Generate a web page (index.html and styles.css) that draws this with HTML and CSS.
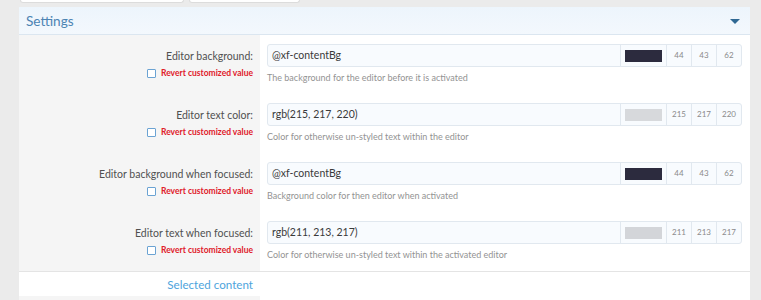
FILE: index.html
```html
<!DOCTYPE html>
<html lang="en">
<head>
    <meta charset="UTF-8" />
    <title>Settings</title>
    <link rel="stylesheet" href="styles.css">
</head>
<body>

<div class="tabs">
    <div class="tab tab-wide"></div>
    <div class="tab tab-narrow"></div>
</div>

<div class="block">
    <h2 class="block-header">
        Settings
        <span class="toggle"></span>
    </h2>

    <div class="row">
        <div class="row-label">
            <label>Editor background:</label>
            <div class="revert"><span class="check"></span>Revert customized value</div>
        </div>
        <div class="row-input">
            <div class="color-input">
                <span class="value">@xf-contentBg</span>
                <span class="swatch-cell"><span class="swatch" style="background: rgb(44, 43, 62);"></span></span>
                <span class="channel">44</span>
                <span class="channel">43</span>
                <span class="channel">62</span>
            </div>
            <p class="hint">The background for the editor before it is activated</p>
        </div>
    </div>

    <div class="row">
        <div class="row-label">
            <label>Editor text color:</label>
            <div class="revert"><span class="check"></span>Revert customized value</div>
        </div>
        <div class="row-input">
            <div class="color-input">
                <span class="value">rgb(215, 217, 220)</span>
                <span class="swatch-cell"><span class="swatch" style="background: rgb(215, 217, 220);"></span></span>
                <span class="channel">215</span>
                <span class="channel">217</span>
                <span class="channel">220</span>
            </div>
            <p class="hint">Color for otherwise un-styled text within the editor</p>
        </div>
    </div>

    <div class="row">
        <div class="row-label">
            <label>Editor background when focused:</label>
            <div class="revert"><span class="check"></span>Revert customized value</div>
        </div>
        <div class="row-input">
            <div class="color-input">
                <span class="value">@xf-contentBg</span>
                <span class="swatch-cell"><span class="swatch" style="background: rgb(44, 43, 62);"></span></span>
                <span class="channel">44</span>
                <span class="channel">43</span>
                <span class="channel">62</span>
            </div>
            <p class="hint">Background color for then editor when activated</p>
        </div>
    </div>

    <div class="row">
        <div class="row-label">
            <label>Editor text when focused:</label>
            <div class="revert"><span class="check"></span>Revert customized value</div>
        </div>
        <div class="row-input">
            <div class="color-input">
                <span class="value">rgb(211, 213, 217)</span>
                <span class="swatch-cell"><span class="swatch" style="background: rgb(211, 213, 217);"></span></span>
                <span class="channel">211</span>
                <span class="channel">213</span>
                <span class="channel">217</span>
            </div>
            <p class="hint">Color for otherwise un-styled text within the activated editor</p>
        </div>
    </div>

    <div class="sub-header">
        <span>Selected content</span>
    </div>

    <div class="row">
        <div class="row-label"></div>
        <div class="row-input"></div>
    </div>
</div>

</body>
</html>
```

FILE: styles.css
```css
body {
    font-family: Lato, 'Open Sans', sans-serif;
    background: #ebebeb;
    color: #333;
    margin: 0;
}
.tabs {
    display: flex;
    gap: 5px;
    height: 3px;
    padding-left: 20px;
    overflow: hidden;
}
.tab {
    height: 2px;
    background: #fff;
    border: 1px solid #dcdcdc;
    border-top: none;
    border-radius: 0 0 3px 3px;
}
.tab-wide {
    width: 162px;
}
.tab-narrow {
    width: 109px;
}
.block {
    margin: 4px 11px 0 19px;
    background: #fff;
}
.block-header {
    display: flex;
    align-items: center;
    justify-content: space-between;
    height: 27px;
    margin: 0;
    padding: 0 10px 0 7px;
    background: linear-gradient(to bottom, #edf5fc, #f3f8fd);
    border-bottom: 1px solid #dbe6f0;
    color: #4c84b3;
    font-size: 13.6px;
    font-weight: 400;
}
.toggle {
    width: 0;
    height: 0;
    border-left: 5px solid transparent;
    border-right: 5px solid transparent;
    border-top: 5px solid #2f6893;
    margin-top: 1px;
}
.row {
    display: grid;
    grid-template-columns: 241px 1fr;
    height: 59px;
}
.row-label {
    background: #f5f5f5;
    text-align: right;
    padding: 13px 7px 0 0;
}
.row-label label {
    display: block;
    font-size: 10.5px;
    line-height: 16px;
    color: #505050;
}
.revert {
    display: flex;
    align-items: center;
    justify-content: flex-end;
    margin-top: 3px;
    font-size: 8.5px;
    font-weight: 700;
    line-height: 12px;
    color: #e0202a;
}
.check {
    width: 7px;
    height: 7px;
    border: 1px solid #6ba3d3;
    border-radius: 1px;
    background: #fff;
    margin-right: 5px;
}
.row-input {
    padding: 9px 8px 0 7px;
}
.color-input {
    display: flex;
    height: 23px;
    box-sizing: border-box;
    border: 1px solid #e1e8ef;
    border-radius: 3px;
    background: #f8fbfe;
    font-size: 10.5px;
}
.value {
    flex: 1;
    padding-left: 4px;
    line-height: 21px;
    color: #3a3a3a;
}
.swatch-cell {
    display: flex;
    align-items: center;
    padding: 0 4px;
    border-left: 1px solid #e1e8ef;
}
.swatch {
    width: 37px;
    height: 12px;
}
.channel {
    width: 24px;
    border-left: 1px solid #e1e8ef;
    text-align: center;
    font-size: 8px;
    line-height: 21px;
    color: #8a8a8a;
}
.hint {
    margin: 5px 0 0;
    font-size: 9px;
    line-height: 12px;
    color: #939393;
}
.sub-header {
    display: grid;
    grid-template-columns: 241px 1fr;
    height: 24px;
    border-top: 1px solid #e4e4e4;
}
.sub-header span {
    text-align: right;
    padding-right: 7px;
    font-size: 11.6px;
    line-height: 25px;
    color: #4ea4dc;
}
```
